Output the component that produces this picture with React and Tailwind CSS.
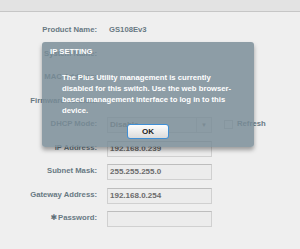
import React from "react";

const font = { fontFamily: '"Liberation Sans", Arial, sans-serif' };

function Label({ children }) {
  return (
    <div className="flex w-[97px] shrink-0 items-center justify-end mt-[4px] h-[16px] leading-[16px] text-[7.7px] font-bold text-[#687983] whitespace-nowrap">
      {children}
    </div>
  );
}

function Input({ value }) {
  return (
    <div className="ml-[10px] mt-[5px] h-[16px] w-[105px] border border-[#d0d0d0] border-t-[#bdbdbd] bg-[#ececec] pl-[2px] leading-[14px] text-[8px] font-bold text-[#6b6b6b]">
      {value}
    </div>
  );
}

function Row({ children }) {
  return <div className="flex h-[23.5px] items-start">{children}</div>;
}

export default function App() {
  return (
    <div style={font} className="relative h-[249px] w-[300px] overflow-hidden bg-[#efefef]">
      <div className="h-[12px] border-b border-[#c6c6c6] bg-[#e3e3e3]" />
      <div className="pt-[6.25px]">
        <Row>
          <Label>Product Name:</Label>
          <div className="ml-[12px] mt-[4px] leading-[16px] text-[7.7px] font-bold text-[#687983]">GS108Ev3</div>
        </Row>
        <Row>
          <Label>System Name:</Label>
        </Row>
        <Row>
          <Label>MAC Address:</Label>
        </Row>
        <Row>
          <Label>Firmware Version:</Label>
        </Row>
        <Row>
          <Label>DHCP Mode:</Label>
          <div className="ml-[10px] mt-[5px] flex h-[16px] w-[105px] items-center border border-[#d0d0d0] bg-[#ececec] pl-[2px] text-[8px] font-bold text-[#6b6b6b]">
            <span className="flex-1">Disable</span>
            <span className="flex h-full w-[15px] items-center justify-center border-l border-[#d0d0d0] text-[6px] text-[#888]">▼</span>
          </div>
          <div className="ml-[12px] mt-[8px] h-[9px] w-[9px] border border-[#c8c8c8] bg-[#f4f4f4]" />
          <div className="ml-[4px] mt-[4px] leading-[16px] text-[7.7px] font-bold text-[#687983]">Refresh</div>
        </Row>
        <Row>
          <Label>IP Address:</Label>
          <Input value="192.168.0.239" />
        </Row>
        <Row>
          <Label>Subnet Mask:</Label>
          <Input value="255.255.255.0" />
        </Row>
        <Row>
          <Label>Gateway Address:</Label>
          <Input value="192.168.0.254" />
        </Row>
        <Row>
          <Label>
            <span style={{ fontFamily: '"DejaVu Sans", sans-serif' }} className="mr-[1px] text-[8px] font-normal leading-[16px] text-[#5f6f78]">✱</span>Password:
          </Label>
          <Input value="" />
        </Row>
      </div>

      <div className="absolute left-[42px] top-[42px] flex h-[105px] w-[212px] flex-col rounded-[3px] bg-[rgba(120,140,150,0.83)] shadow-[0_3px_4px_rgba(0,0,0,0.35)]">
        <div className="ml-[8px] mt-[4px] leading-[11px] text-[7.7px] font-bold text-white">IP SETTING</div>
        <div className="ml-[20px] mt-[14.5px] whitespace-nowrap leading-[11px] text-[7.7px] font-bold text-white">
          The Plus Utility management is currently
          <br />
          disabled for this switch. Use the web browser-
          <br />
          based management interface to log in to this
          <br />
          device.
        </div>
        <div className="mt-[8.5px] flex justify-center">
          <div className="flex h-[15px] w-[42px] items-center justify-center rounded-[3px] border border-[#3f8fd6] bg-gradient-to-b from-[#fdfdfd] to-[#dcdcdc] text-[8px] font-bold text-[#222]">
            OK
          </div>
        </div>
      </div>
    </div>
  );
}
